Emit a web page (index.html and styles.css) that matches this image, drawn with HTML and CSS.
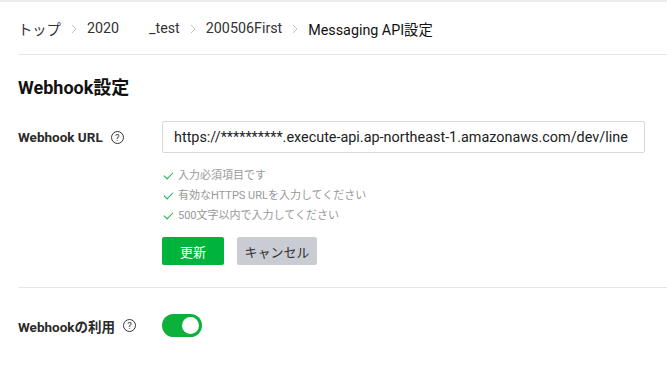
FILE: index.html
```html
<!DOCTYPE html>
<html lang="ja">
<head>
    <meta charset="UTF-8">
    <meta name="viewport" content="width=device-width, initial-scale=1.0">
    <title>Messaging API設定</title>
    <link rel="stylesheet" href="styles.css">
</head>
<body>
    <div class="page">
        <nav class="breadcrumb">
            <span class="crumb">トップ</span>
            <svg class="sep" viewBox="0 0 6 10" width="6" height="10"><path d="M1 1l4 4-4 4" fill="none" stroke="#c4c4c4" stroke-width="1"/></svg>
            <span class="crumb crumb-hidden">2020</span>
            <span class="crumb">_test</span>
            <svg class="sep" viewBox="0 0 6 10" width="6" height="10"><path d="M1 1l4 4-4 4" fill="none" stroke="#c4c4c4" stroke-width="1"/></svg>
            <span class="crumb">200506First</span>
            <svg class="sep" viewBox="0 0 6 10" width="6" height="10"><path d="M1 1l4 4-4 4" fill="none" stroke="#c4c4c4" stroke-width="1"/></svg>
            <span class="crumb current">Messaging API設定</span>
        </nav>

        <section class="section">
            <h2>Webhook設定</h2>

            <div class="field">
                <div class="field-label">
                    Webhook URL
                    <span class="help">?</span>
                </div>
                <div class="field-body">
                    <input class="text-input" type="text" value="https://**********.execute-api.ap-northeast-1.amazonaws.com/dev/line">
                    <ul class="checks">
                        <li><span class="tick"></span>入力必須項目です</li>
                        <li><span class="tick"></span>有効なHTTPS URLを入力してください</li>
                        <li><span class="tick"></span>500文字以内で入力してください</li>
                    </ul>
                    <div class="buttons">
                        <button class="btn btn-primary">更新</button>
                        <button class="btn btn-cancel">キャンセル</button>
                    </div>
                </div>
            </div>
        </section>

        <section class="section toggle-section">
            <div class="field field-center">
                <div class="field-label">
                    Webhookの利用
                    <span class="help">?</span>
                </div>
                <div class="field-body">
                    <span class="switch on"><span class="knob"></span></span>
                </div>
            </div>
        </section>
    </div>
</body>
</html>
```

FILE: styles.css
```css
body {
    margin: 0;
    font-family: Roboto, "Noto Sans CJK JP", sans-serif;
    color: #111;
    background: #fff;
}
.page {
    border-top: 2px solid #ececec;
    padding: 0 0 0 18px;
}
.breadcrumb {
    display: flex;
    align-items: center;
    height: 52px;
    font-size: 14.3px;
    color: #333;
    border-bottom: 1px solid #e6e6e6;
}
.crumb-hidden {
    margin-right: 30px;
}
.sep {
    margin: 1px 10px 0 10px;
}
.current {
    color: #111;
}
.section h2 {
    font-size: 18px;
    font-weight: bold;
    margin: 22px 0 22px 0;
    line-height: 22px;
    color: #111;
}
.field {
    display: flex;
    align-items: flex-start;
}
.field-center {
    align-items: center;
}
.field-label {
    width: 144px;
    flex-shrink: 0;
    font-size: 13.5px;
    font-weight: bold;
    color: #2a2a2a;
    display: flex;
    align-items: center;
    height: 32px;
}
.help {
    display: inline-flex;
    align-items: center;
    justify-content: center;
    width: 11px;
    height: 11px;
    border: 1.4px solid #333;
    border-radius: 50%;
    font-size: 9.5px;
    font-weight: normal;
    margin-left: 8px;
    color: #333;
}
.field-body {
    flex: 1;
    padding-right: 22px;
}
.text-input {
    box-sizing: border-box;
    display: block;
    width: 100%;
    height: 32px;
    border: 1px solid #d9d9d9;
    border-radius: 2px;
    padding: 0 11px;
    font-family: Roboto, "Noto Sans CJK JP", sans-serif;
    font-size: 14.4px;
    color: #222;
}
.checks {
    list-style: none;
    margin: 13px 0 0 0;
    padding: 0;
}
.checks li {
    font-size: 11px;
    color: #999;
    height: 20px;
    line-height: 20px;
    display: flex;
    align-items: center;
}
.tick {
    display: inline-block;
    width: 8px;
    height: 4px;
    border-left: 1.3px solid #17b34a;
    border-bottom: 1.3px solid #17b34a;
    transform: rotate(-45deg);
    margin: 0 5px 3px 2px;
}
.buttons {
    display: flex;
    gap: 13px;
    margin-top: 11px;
}
.btn {
    height: 28px;
    border: none;
    border-radius: 2px;
    font-family: Roboto, "Noto Sans CJK JP", sans-serif;
    font-size: 13px;
    padding: 0;
}
.btn-primary {
    width: 62px;
    background: #00b33c;
    color: #fff;
}
.btn-cancel {
    width: 80px;
    background: #c9ccd2;
    color: #333;
}
.toggle-section {
    border-top: 1px solid #e6e6e6;
    margin-top: 22px;
    padding-top: 15px;
}
.toggle-section .field-label {
    height: 45px;
}
.switch {
    display: block;
    width: 40px;
    height: 23px;
    border-radius: 12px;
    background: #ccc;
    position: relative;
}
.switch.on {
    background: #0cb13b;
}
.knob {
    position: absolute;
    top: 3px;
    right: 3px;
    width: 17px;
    height: 17px;
    border-radius: 50%;
    background: #fff;
}
```
